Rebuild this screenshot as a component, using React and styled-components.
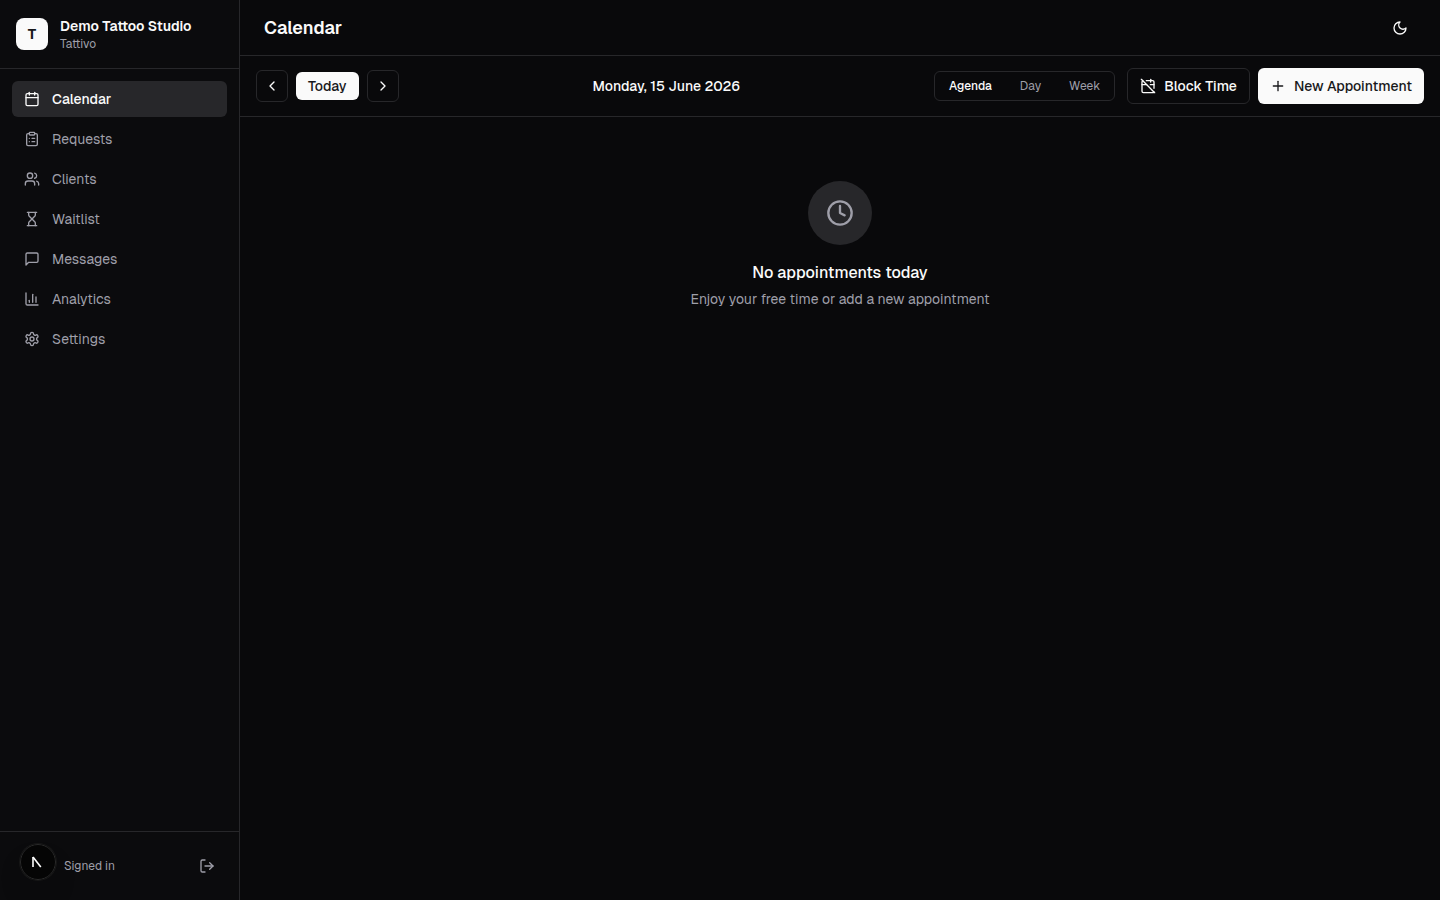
import React from 'react';
import styled, { createGlobalStyle } from 'styled-components';
import {
    Calendar, CalendarOff, ClipboardList, Users, Hourglass, ChartColumn,
    LogOut, ChevronLeft, ChevronRight, Plus, Clock
} from 'lucide-react';

const GlobalStyle = createGlobalStyle`
    * {
        box-sizing: border-box;
    }
    body {
        margin: 0;
        background: #09090b;
        color: #fafafa;
        font-family: Geist, Inter, "Liberation Sans", sans-serif;
        font-size: 14px;
        line-height: 20px;
    }
    button {
        font: inherit;
        color: inherit;
        padding: 0;
        border: none;
        background: none;
        white-space: nowrap;
        cursor: pointer;
    }
`;

const Layout = styled.div`
    display: flex;
    height: 100vh;
    overflow: hidden;
`;

const Sidebar = styled.aside`
    display: flex;
    flex-direction: column;
    flex: none;
    width: 240px;
    background: #0b0b0d;
    border-right: 1px solid #27272a;
`;

const Brand = styled.div`
    display: flex;
    align-items: center;
    gap: 12px;
    height: 69px;
    padding: 0 16px;
    border-bottom: 1px solid #27272a;
`;

const BrandMark = styled.div`
    display: flex;
    align-items: center;
    justify-content: center;
    width: 32px;
    height: 32px;
    border-radius: 8px;
    background: #fafafa;
    color: #18181b;
    font-weight: 700;
`;

const BrandName = styled.div`
    font-weight: 600;
    line-height: 20px;
`;

const BrandSub = styled.div`
    font-size: 12px;
    line-height: 16px;
    color: #9f9fa9;
`;

const Nav = styled.nav`
    display: flex;
    flex-direction: column;
    flex: 1;
    gap: 4px;
    padding: 12px;
`;

const NavItem = styled.a`
    display: flex;
    align-items: center;
    gap: 12px;
    height: 36px;
    padding: 0 12px;
    border-radius: 6px;
    background: ${({ $active }) => ($active ? '#27272a' : 'transparent')};
    color: ${({ $active }) => ($active ? '#fafafa' : '#9f9fa9')};
    font-weight: ${({ $active }) => ($active ? 500 : 400)};
`;

const Account = styled.div`
    display: flex;
    align-items: center;
    justify-content: space-between;
    height: 69px;
    padding: 0 24px 0 20px;
    border-top: 1px solid #27272a;
    color: #9f9fa9;
`;

const AccountInfo = styled.div`
    display: flex;
    align-items: center;
    gap: 8px;
    font-size: 12px;
`;

const Avatar = styled.svg`
    display: block;
    position: relative;
    top: -4px;
    border-radius: 50%;
    box-shadow: 0 0 0 1px #171717, 0 16px 32px -8px rgba(0, 0, 0, 0.24);
`;

const Main = styled.main`
    display: flex;
    flex-direction: column;
    flex: 1;
    min-width: 0;
`;

const Header = styled.header`
    display: flex;
    align-items: center;
    justify-content: space-between;
    height: 56px;
    padding: 0 32px 0 24px;
    border-bottom: 1px solid #27272a;
`;

const Title = styled.h1`
    margin: 0;
    font-size: 18px;
    line-height: 28px;
    font-weight: 600;
`;

const IconButton = styled.button`
    display: flex;
`;

const Toolbar = styled.div`
    display: flex;
    align-items: center;
    justify-content: space-between;
    height: 61px;
    padding: 0 16px;
    border-bottom: 1px solid #27272a;
`;

const Group = styled.div`
    display: flex;
    align-items: center;
    gap: 8px;
`;

const ArrowButton = styled.button`
    display: flex;
    align-items: center;
    justify-content: center;
    width: 32px;
    height: 32px;
    border: 1px solid #27272a;
    border-radius: 6px;
`;

const TodayButton = styled.button`
    height: 28px;
    padding: 0 12px;
    border-radius: 6px;
    background: #fafafa;
    color: #18181b;
    font-weight: 500;
`;

const DateLabel = styled.div`
    font-weight: 500;
`;

const Tabs = styled.div`
    display: flex;
    align-items: center;
    gap: 4px;
    height: 30px;
    padding: 2px;
    margin-right: 4px;
    border: 1px solid #27272a;
    border-radius: 6px;
`;

const Tab = styled.button`
    height: 24px;
    padding: 0 12px;
    border-radius: 4px;
    font-size: 12px;
    font-weight: ${({ $active }) => ($active ? 500 : 400)};
    color: ${({ $active }) => ($active ? '#fafafa' : '#9f9fa9')};
`;

const ActionButton = styled.button`
    display: flex;
    align-items: center;
    gap: 8px;
    height: 36px;
    padding: 0 12px;
    border: ${({ $primary }) => ($primary ? 'none' : '1px solid #27272a')};
    border-radius: 6px;
    background: ${({ $primary }) => ($primary ? '#fafafa' : 'transparent')};
    color: ${({ $primary }) => ($primary ? '#18181b' : '#fafafa')};
    font-weight: 500;
`;

const Empty = styled.section`
    display: flex;
    flex-direction: column;
    align-items: center;
    padding-top: 64px;
`;

const EmptyIcon = styled.div`
    display: flex;
    align-items: center;
    justify-content: center;
    width: 64px;
    height: 64px;
    margin-bottom: 16px;
    border-radius: 50%;
    background: #27272a;
    color: #9f9fa9;
`;

const EmptyTitle = styled.h2`
    margin: 0 0 4px;
    font-size: 16px;
    line-height: 24px;
    font-weight: 500;
`;

const EmptyText = styled.p`
    margin: 0;
    color: #9f9fa9;
`;

const LineIcon = styled.svg.attrs({ viewBox: '0 0 24 24' })`
    flex: none;
    width: 16px;
    height: 16px;
    fill: none;
    stroke: currentColor;
    stroke-width: 2;
    stroke-linecap: round;
    stroke-linejoin: round;
`;

const Message = () => (
    <LineIcon>
        <path d="M21 15a2 2 0 0 1-2 2H7l-4 4V5a2 2 0 0 1 2-2h14a2 2 0 0 1 2 2z" />
    </LineIcon>
);

const Gear = () => (
    <LineIcon>
        <path d="M12.22 2h-.44a2 2 0 0 0-2 2v.18a2 2 0 0 1-1 1.73l-.43.25a2 2 0 0 1-2 0l-.15-.08a2 2 0 0 0-2.73.73l-.22.38a2 2 0 0 0 .73 2.73l.15.1a2 2 0 0 1 1 1.72v.51a2 2 0 0 1-1 1.74l-.15.09a2 2 0 0 0-.73 2.73l.22.38a2 2 0 0 0 2.73.73l.15-.08a2 2 0 0 1 2 0l.43.25a2 2 0 0 1 1 1.73V20a2 2 0 0 0 2 2h.44a2 2 0 0 0 2-2v-.18a2 2 0 0 1 1-1.73l.43-.25a2 2 0 0 1 2 0l.15.08a2 2 0 0 0 2.73-.73l.22-.39a2 2 0 0 0-.73-2.73l-.15-.08a2 2 0 0 1-1-1.74v-.5a2 2 0 0 1 1-1.74l.15-.09a2 2 0 0 0 .73-2.73l-.22-.38a2 2 0 0 0-2.73-.73l-.15.08a2 2 0 0 1-2 0l-.43-.25a2 2 0 0 1-1-1.73V4a2 2 0 0 0-2-2z" />
        <circle cx="12" cy="12" r="3" />
    </LineIcon>
);

const Crescent = () => (
    <LineIcon>
        <path d="M12 3a6 6 0 0 0 9 9 9 9 0 1 1-9-9Z" />
    </LineIcon>
);

const navItems = [
    { label: 'Calendar', icon: Calendar, active: true },
    { label: 'Requests', icon: ClipboardList },
    { label: 'Clients', icon: Users },
    { label: 'Waitlist', icon: Hourglass },
    { label: 'Messages', icon: Message },
    { label: 'Analytics', icon: ChartColumn },
    { label: 'Settings', icon: Gear },
];

const App = () => {
    return (
        <>
            <GlobalStyle />
            <Layout>
                <Sidebar>
                    <Brand>
                        <BrandMark>T</BrandMark>
                        <div>
                            <BrandName>Demo Tattoo Studio</BrandName>
                            <BrandSub>Tattivo</BrandSub>
                        </div>
                    </Brand>
                    <Nav>
                        {navItems.map(({ label, icon: Icon, active }) => (
                            <NavItem key={label} $active={active}>
                                <Icon size={16} />
                                {label}
                            </NavItem>
                        ))}
                    </Nav>
                    <Account>
                        <AccountInfo>
                            <Avatar width="36" height="36" viewBox="0 0 36 36" fill="none">
                                <circle cx="18" cy="18" r="17.5" fill="#050505" stroke="#2b2b2b" />
                                <path d="M13 23V13" stroke="#fff" strokeWidth="1.6" />
                                <path d="M13 13L20.8 23" stroke="#fff" strokeWidth="1.6" />
                            </Avatar>
                            Signed in
                        </AccountInfo>
                        <IconButton><LogOut size={16} /></IconButton>
                    </Account>
                </Sidebar>
                <Main>
                    <Header>
                        <Title>Calendar</Title>
                        <IconButton><Crescent /></IconButton>
                    </Header>
                    <Toolbar>
                        <Group>
                            <ArrowButton><ChevronLeft size={16} /></ArrowButton>
                            <TodayButton>Today</TodayButton>
                            <ArrowButton><ChevronRight size={16} /></ArrowButton>
                        </Group>
                        <DateLabel>Monday, 15 June 2026</DateLabel>
                        <Group>
                            <Tabs>
                                <Tab $active>Agenda</Tab>
                                <Tab>Day</Tab>
                                <Tab>Week</Tab>
                            </Tabs>
                            <ActionButton>
                                <CalendarOff size={16} />
                                Block Time
                            </ActionButton>
                            <ActionButton $primary>
                                <Plus size={16} />
                                New Appointment
                            </ActionButton>
                        </Group>
                    </Toolbar>
                    <Empty>
                        <EmptyIcon><Clock size={28} /></EmptyIcon>
                        <EmptyTitle>No appointments today</EmptyTitle>
                        <EmptyText>Enjoy your free time or add a new appointment</EmptyText>
                    </Empty>
                </Main>
            </Layout>
        </>
    )
}

export default App;
